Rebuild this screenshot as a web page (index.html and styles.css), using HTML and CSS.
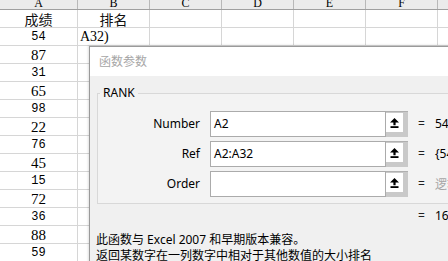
FILE: index.html
```html
<!DOCTYPE html>
<html lang="zh-CN">
<head>
<meta charset="utf-8">
<title>函数参数</title>
<link rel="stylesheet" href="styles.css">
</head>
<body>
<div class="sheet">
  <div class="row head">
    <div class="c ca"><span class="hl">A</span></div><div class="c"><span class="hl">B</span></div><div class="c"><span class="hl">C</span></div><div class="c"><span class="hl">D</span></div><div class="c"><span class="hl">E</span></div><div class="c"><span class="hl">F</span></div><div class="c"><span class="hl">G</span></div>
  </div>
  <div class="row">
    <div class="c ca cjk">成绩</div><div class="c cjk">排名</div><div class="c"></div><div class="c"></div><div class="c"></div><div class="c"></div><div class="c"></div>
  </div>
  <div class="row">
    <div class="c ca sm">54</div><div class="c left fx">A32)</div><div class="c"></div><div class="c"></div><div class="c"></div><div class="c"></div><div class="c"></div>
  </div>
  <div class="row"><div class="c ca lg">87</div><div class="c"></div><div class="c"></div><div class="c"></div><div class="c"></div><div class="c"></div><div class="c"></div></div>
  <div class="row"><div class="c ca sm">31</div><div class="c"></div><div class="c"></div><div class="c"></div><div class="c"></div><div class="c"></div><div class="c"></div></div>
  <div class="row"><div class="c ca lg">65</div><div class="c"></div><div class="c"></div><div class="c"></div><div class="c"></div><div class="c"></div><div class="c"></div></div>
  <div class="row"><div class="c ca sm">98</div><div class="c"></div><div class="c"></div><div class="c"></div><div class="c"></div><div class="c"></div><div class="c"></div></div>
  <div class="row"><div class="c ca lg">22</div><div class="c"></div><div class="c"></div><div class="c"></div><div class="c"></div><div class="c"></div><div class="c"></div></div>
  <div class="row"><div class="c ca sm">76</div><div class="c"></div><div class="c"></div><div class="c"></div><div class="c"></div><div class="c"></div><div class="c"></div></div>
  <div class="row"><div class="c ca lg">45</div><div class="c"></div><div class="c"></div><div class="c"></div><div class="c"></div><div class="c"></div><div class="c"></div></div>
  <div class="row"><div class="c ca sm">15</div><div class="c"></div><div class="c"></div><div class="c"></div><div class="c"></div><div class="c"></div><div class="c"></div></div>
  <div class="row"><div class="c ca lg">72</div><div class="c"></div><div class="c"></div><div class="c"></div><div class="c"></div><div class="c"></div><div class="c"></div></div>
  <div class="row"><div class="c ca sm">36</div><div class="c"></div><div class="c"></div><div class="c"></div><div class="c"></div><div class="c"></div><div class="c"></div></div>
  <div class="row"><div class="c ca lg">88</div><div class="c"></div><div class="c"></div><div class="c"></div><div class="c"></div><div class="c"></div><div class="c"></div></div>
  <div class="row"><div class="c ca sm">59</div><div class="c"></div><div class="c"></div><div class="c"></div><div class="c"></div><div class="c"></div><div class="c"></div></div>
</div>

<div class="dialog">
  <div class="titlebar">函数参数</div>
  <div class="dbody">
    <fieldset class="group">
      <legend>RANK</legend>
      <div class="arg">
        <span class="arg-label">Number</span>
        <span class="arg-input">A2</span>
        <span class="pick"><span class="pick-face"><svg width="9" height="10" viewBox="0 0 9 10"><polygon points="4.5,0 9,4.5 5.6,4.5 5.6,7.2 3.4,7.2 3.4,4.5 0,4.5" fill="#000"/><rect x="0.5" y="8.2" width="8" height="1.8" fill="#000"/></svg></span></span>
        <span class="eq">=</span>
        <span class="val">54</span>
      </div>
      <div class="arg">
        <span class="arg-label">Ref</span>
        <span class="arg-input">A2:A32</span>
        <span class="pick"><span class="pick-face"><svg width="9" height="10" viewBox="0 0 9 10"><polygon points="4.5,0 9,4.5 5.6,4.5 5.6,7.2 3.4,7.2 3.4,4.5 0,4.5" fill="#000"/><rect x="0.5" y="8.2" width="8" height="1.8" fill="#000"/></svg></span></span>
        <span class="eq">=</span>
        <span class="val">{54;87;31;65;98;22}</span>
      </div>
      <div class="arg">
        <span class="arg-label">Order</span>
        <span class="arg-input"></span>
        <span class="pick"><span class="pick-face"><svg width="9" height="10" viewBox="0 0 9 10"><polygon points="4.5,0 9,4.5 5.6,4.5 5.6,7.2 3.4,7.2 3.4,4.5 0,4.5" fill="#000"/><rect x="0.5" y="8.2" width="8" height="1.8" fill="#000"/></svg></span></span>
        <span class="eq">=</span>
        <span class="val muted">逻辑值</span>
      </div>
    </fieldset>
    <div class="result"><span class="eq">=</span><span class="val">16</span></div>
    <p class="desc first">此函数与 Excel 2007 和早期版本兼容。</p>
    <p class="desc">返回某数字在一列数字中相对于其他数值的大小排名</p>
  </div>
</div>
</body>
</html>
```

FILE: styles.css
```css
* {
  box-sizing: border-box;
  margin: 0;
  padding: 0;
}

html,
body {
  width: 448px;
  height: 261px;
  overflow: hidden;
  background: #ffffff;
}

body {
  position: relative;
  font-family: "Noto Sans", "Noto Sans CJK SC", sans-serif;
  color: #000;
}

/* ---------- spreadsheet ---------- */
.sheet {
  display: flex;
  flex-direction: column;
  width: 600px;
}

.row {
  display: grid;
  grid-template-columns: 78px repeat(6, 72px);
  height: 18px;
  border-bottom: 1px solid #d6d6d6;
}

.row.head {
  height: 10px;
  background: #ebebeb;
  border-bottom: 1px solid #9f9f9f;
}

.c {
  border-right: 1px solid #d6d6d6;
  text-align: center;
  line-height: 17px;
  overflow: hidden;
  white-space: nowrap;
}

.head .c {
  border-right-color: #b8b8b8;
}

.hl {
  display: block;
  font-family: "Liberation Serif", serif;
  font-size: 12px;
  line-height: 14px;
  margin-top: -4px;
}

.cjk {
  font-family: "Noto Sans CJK SC", sans-serif;
  font-size: 14px;
  line-height: 18px;
  color: #111;
}

.sm {
  font-family: "Liberation Mono", monospace;
  font-size: 12px;
  line-height: 18px;
}

.lg {
  font-family: "Liberation Serif", serif;
  font-size: 15px;
  line-height: 18px;
}

.left {
  text-align: left;
  padding-left: 2px;
}

.fx {
  font-family: "Liberation Serif", serif;
  font-size: 14px;
  line-height: 18px;
}

/* ---------- dialog ---------- */
.dialog {
  position: absolute;
  left: 89px;
  top: 46px;
  width: 400px;
  height: 240px;
  border-left: 1px solid #9a9a9a;
  border-top: 1px solid #9a9a9a;
  box-shadow: -1px -1px 2px rgba(0, 0, 0, 0.12);
  background: #f0f0f0;
}

.titlebar {
  height: 29px;
  line-height: 28px;
  padding-left: 9px;
  background: #ffffff;
  color: #a6a6a6;
  font-family: "Noto Sans CJK SC", sans-serif;
  font-size: 12px;
}

.dbody {
  font-size: 12px;
}

.group {
  margin: 9px 0 0 7px;
  width: 420px;
  border: 1px solid #d8d8d8;
  padding: 0 0 6px 0;
  background: #f3f3f3;
  display: flex;
  flex-direction: column;
  gap: 4px;
}

.group legend {
  margin-left: 2px;
  padding: 0 3px;
  line-height: 16px;
  font-size: 12px;
  color: #000;
}

.arg {
  display: flex;
  align-items: center;
  height: 26px;
}

.arg:first-of-type {
  margin-top: 10px;
}

.arg-label {
  width: 102px;
  margin-right: 10px;
  text-align: right;
  line-height: 16px;
}

.arg-input {
  width: 176px;
  height: 26px;
  border: 1px solid #ababab;
  background: #ffffff;
  padding-left: 3px;
  line-height: 24px;
  white-space: nowrap;
}

.pick {
  display: flex;
  width: 22px;
  height: 26px;
  padding: 1px 5px 5px 0;
  background: #c9c9c9;
  border-top: 1px solid #b0b0b0;
}

.pick-face {
  flex: 1;
  display: flex;
  align-items: center;
  justify-content: center;
  background: #ffffff;
}

.eq {
  display: inline-block;
  width: 17px;
  margin-left: 10px;
  color: #222;
  line-height: 16px;
}

.val {
  white-space: nowrap;
  line-height: 16px;
}

.muted {
  color: #a5a5a5;
  font-family: "Noto Sans CJK SC", sans-serif;
}

.result {
  display: flex;
  margin-top: 4px;
  padding-left: 318px;
  line-height: 16px;
}

.desc {
  padding-left: 6px;
  line-height: 16px;
  white-space: nowrap;
}

.desc.first {
  margin-top: 8px;
}
```
